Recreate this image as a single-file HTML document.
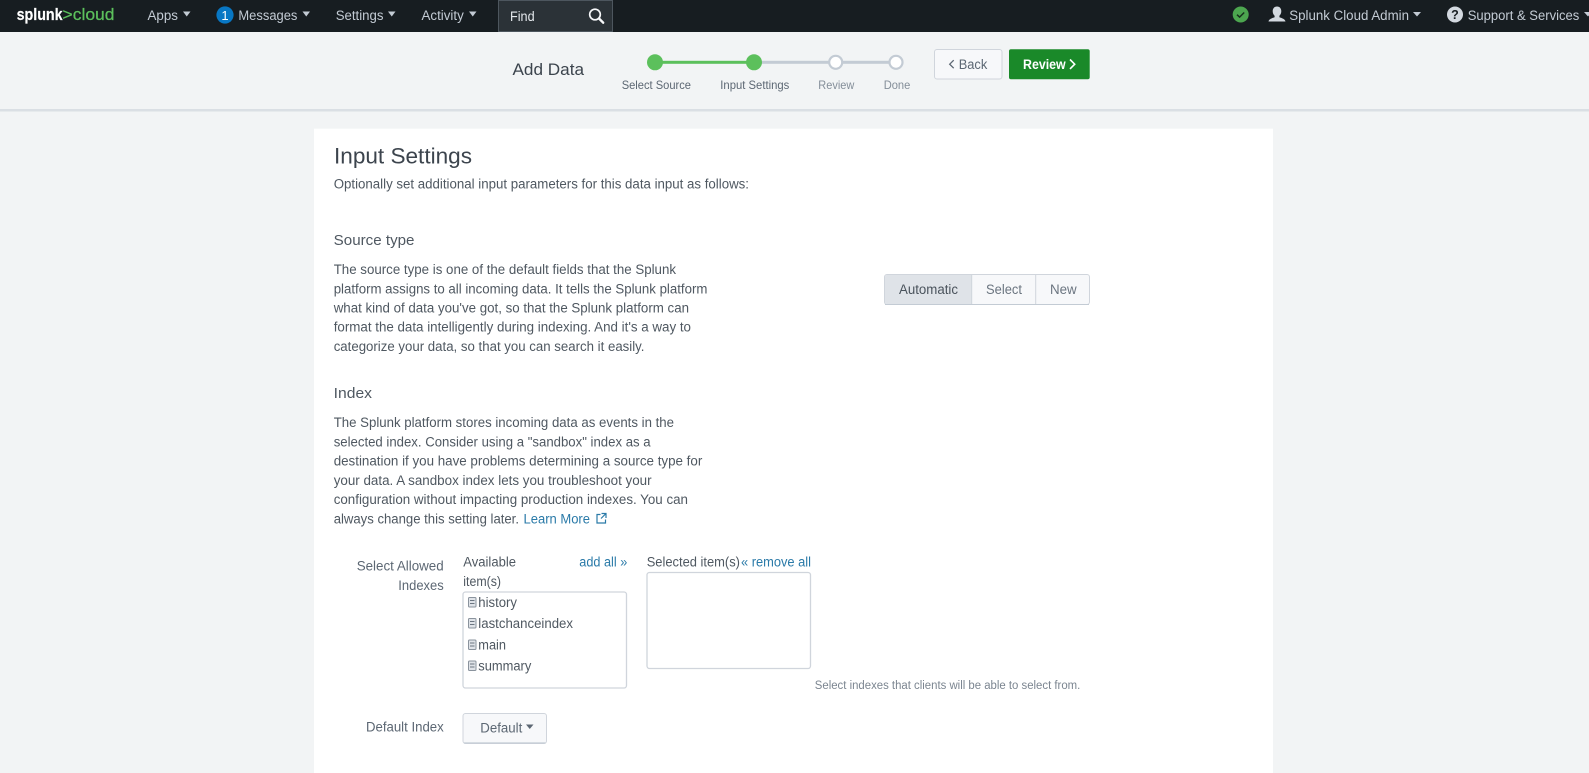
<!DOCTYPE html>
<html lang="en">
<head>
<meta charset="utf-8">
<title>Add Data - Input Settings</title>
<style>
html,body{margin:0;padding:0;width:1589px;height:773px;overflow:hidden;background:#f2f4f5}
svg{display:block;font-family:"Liberation Sans",sans-serif;filter:blur(.35px)}
.n{font-size:13.5px;fill:#c3cbd4}
.p{font-size:13.4px;fill:#4f5861}
.l{font-size:13.4px;fill:#5c6773}
.a{font-size:13.4px;fill:#2a7aa8}
</style>
</head>
<body>
<svg width="1589" height="773" viewBox="0 0 1589 773" xmlns="http://www.w3.org/2000/svg">
<rect width="1589" height="773" fill="#f2f4f5"/>
<!-- nav -->
<rect width="1589" height="32" fill="#171d21"/>
<text x="16.600" y="20" font-size="17" font-weight="700" fill="#fff" stroke="#fff" stroke-width=".2" textLength="46" lengthAdjust="spacingAndGlyphs">splunk</text>
<text x="62.500" y="20" font-size="17" fill="#5cc05c" stroke="#5cc05c" stroke-width=".25" textLength="52" lengthAdjust="spacingAndGlyphs">&gt;cloud</text>
<text class="n" x="147.500" y="20" textLength="30.500" lengthAdjust="spacingAndGlyphs">Apps</text>
<path d="M183 11.500h7.500l-3.750 5z" fill="#c3cbd4"/>
<circle cx="225" cy="15" r="8.600" fill="#0877c4"/>
<text x="225" y="20" font-size="13" fill="#fff" text-anchor="middle">1</text>
<text class="n" x="238.400" y="20" textLength="59" lengthAdjust="spacingAndGlyphs">Messages</text>
<path d="M302.500 11.500h7.500l-3.750 5z" fill="#c3cbd4"/>
<text class="n" x="335.700" y="20" textLength="47.800" lengthAdjust="spacingAndGlyphs">Settings</text>
<path d="M388 11.500h7.500l-3.750 5z" fill="#c3cbd4"/>
<text class="n" x="421.500" y="20" textLength="42.300" lengthAdjust="spacingAndGlyphs">Activity</text>
<path d="M469 11.500h7.500l-3.750 5z" fill="#c3cbd4"/>
<rect x="498.500" y="0.500" width="114" height="31" fill="#2b3237" stroke="#4d565e"/>
<text x="510" y="21" font-size="13.500" fill="#e4e8ec" textLength="24.600" lengthAdjust="spacingAndGlyphs">Find</text>
<circle cx="595" cy="14.500" r="5.300" fill="none" stroke="#f7f8fa" stroke-width="1.700"/>
<path d="M599 18.500l4.200 4.200" stroke="#f7f8fa" stroke-width="2.400" stroke-linecap="round"/>
<circle cx="1240.700" cy="14.500" r="8" fill="#4ca64f"/>
<path d="M1237 14.700l2.600 2.400 4.600-4.600" fill="none" stroke="#17301c" stroke-width="1.500"/>
<path d="M1277 6.500c2.800 0 4.300 2.100 4.300 4.700 0 2.100-1 3.700-1.900 4.500v1.500c2.500.9 5.600 1.700 6.100 4.300h-17c.5-2.600 3.600-3.400 6.100-4.300v-1.500c-.9-.8-1.900-2.400-1.900-4.500 0-2.600 1.500-4.700 4.300-4.700z" fill="#d3d9e0"/>
<text class="n" x="1289.300" y="20" textLength="119.700" lengthAdjust="spacingAndGlyphs">Splunk Cloud Admin</text>
<path d="M1413 12h8l-4 4.500z" fill="#c3cbd4"/>
<circle cx="1455" cy="14.500" r="8" fill="#d3d9e0"/>
<text x="1455" y="19" font-size="12.500" font-weight="700" fill="#171d21" text-anchor="middle">?</text>
<text class="n" x="1467.700" y="20" textLength="111.600" lengthAdjust="spacingAndGlyphs">Support &amp; Services</text>
<path d="M1584 12h8l-4 4.500z" fill="#c3cbd4"/>
<!-- header band -->
<rect y="109" width="1589" height="2.500" fill="#dadfe4"/>
<text x="512.500" y="75" font-size="17" fill="#3c444d" textLength="71.500" lengthAdjust="spacingAndGlyphs">Add Data</text>
<rect x="655" y="60.800" width="99" height="3" fill="#5cc05c"/>
<rect x="754" y="60.800" width="142" height="3" fill="#c3cbd4"/>
<circle cx="655" cy="62.300" r="8" fill="#5cc05c"/>
<circle cx="754" cy="62.300" r="8" fill="#5cc05c"/>
<circle cx="835.700" cy="62.300" r="6.500" fill="#fff" stroke="#c3cbd4" stroke-width="2.200"/>
<circle cx="896" cy="62.300" r="6.500" fill="#fff" stroke="#c3cbd4" stroke-width="2.200"/>
<text x="621.700" y="89" font-size="12" fill="#5c6773" textLength="69.300" lengthAdjust="spacingAndGlyphs">Select Source</text>
<text x="720.300" y="89" font-size="12" fill="#5c6773" textLength="69" lengthAdjust="spacingAndGlyphs">Input Settings</text>
<text x="818.300" y="89" font-size="12" fill="#848e99" textLength="36" lengthAdjust="spacingAndGlyphs">Review</text>
<text x="883.700" y="89" font-size="12" fill="#848e99" textLength="26.600" lengthAdjust="spacingAndGlyphs">Done</text>
<rect x="934.500" y="49.500" width="67.500" height="29.500" rx="2.500" fill="#f7f8fa" stroke="#d0d5dc"/>
<path d="M953.700 60.200l-4 4 4 4" fill="none" stroke="#5c6773" stroke-width="1.300"/>
<text x="958.700" y="69" font-size="13.500" fill="#5c6773" textLength="28.600" lengthAdjust="spacingAndGlyphs">Back</text>
<rect x="1009" y="49.300" width="80.700" height="30" rx="2" fill="#1a8929"/>
<text x="1023" y="69" font-size="13.500" font-weight="700" fill="#fff" textLength="42.700" lengthAdjust="spacingAndGlyphs">Review</text>
<path d="M1070 59.500l4.700 4.700-4.700 4.700" fill="none" stroke="#fff" stroke-width="1.600"/>
<!-- panel -->
<rect x="314" y="128.700" width="959" height="645" fill="#fff"/>
<text x="334" y="163.300" font-size="22" fill="#3c444d" textLength="138" lengthAdjust="spacingAndGlyphs">Input Settings</text>
<text class="p" x="333.700" y="188.300" textLength="415.300" lengthAdjust="spacingAndGlyphs">Optionally set additional input parameters for this data input as follows:</text>
<text x="333.700" y="245" font-size="14.500" fill="#4f5861" textLength="80.800" lengthAdjust="spacingAndGlyphs">Source type</text>
<text class="p" x="333.700" y="274" textLength="342.300" lengthAdjust="spacingAndGlyphs">The source type is one of the default fields that the Splunk</text>
<text class="p" x="333.700" y="293.300" textLength="373.700" lengthAdjust="spacingAndGlyphs">platform assigns to all incoming data. It tells the Splunk platform</text>
<text class="p" x="333.700" y="312.300" textLength="355.300" lengthAdjust="spacingAndGlyphs">what kind of data you've got, so that the Splunk platform can</text>
<text class="p" x="333.700" y="331.700" textLength="357.300" lengthAdjust="spacingAndGlyphs">format the data intelligently during indexing. And it's a way to</text>
<text class="p" x="333.700" y="351" textLength="310.800" lengthAdjust="spacingAndGlyphs">categorize your data, so that you can search it easily.</text>
<text x="333.700" y="398" font-size="14.500" fill="#4f5861" textLength="38.300" lengthAdjust="spacingAndGlyphs">Index</text>
<text class="p" x="333.700" y="427" textLength="340.300" lengthAdjust="spacingAndGlyphs">The Splunk platform stores incoming data as events in the</text>
<text class="p" x="333.700" y="446.300" textLength="316.900" lengthAdjust="spacingAndGlyphs">selected index. Consider using a "sandbox" index as a</text>
<text class="p" x="333.700" y="465.600" textLength="368.600" lengthAdjust="spacingAndGlyphs">destination if you have problems determining a source type for</text>
<text class="p" x="333.700" y="484.900" textLength="317.900" lengthAdjust="spacingAndGlyphs">your data. A sandbox index lets you troubleshoot your</text>
<text class="p" x="333.700" y="504.200" textLength="354.300" lengthAdjust="spacingAndGlyphs">configuration without impacting production indexes. You can</text>
<text class="p" x="333.700" y="523.500" textLength="185.300" lengthAdjust="spacingAndGlyphs">always change this setting later.</text>
<text class="a" x="523.500" y="523.500" textLength="66.500" lengthAdjust="spacingAndGlyphs">Learn More</text>
<path d="M600.500 514.500h-3.500v8.500h8.500v-3.500M601.500 513.500h4.500v4.500M606 513.500l-5 5" fill="none" stroke="#2a7aa8" stroke-width="1.200"/>
<!-- toggle -->
<rect x="884.500" y="274.500" width="205" height="30" rx="2.500" fill="#f7f8fa" stroke="#d0d5dc"/>
<path d="M887 275h84.500v29H887a2 2 0 0 1-2-2v-25a2 2 0 0 1 2-2z" fill="#dfe3e8"/>
<path d="M971.700 274.500v30M1035.700 274.500v30" stroke="#d0d5dc"/>
<path d="M885 304.500h204" stroke="#c3cbd4"/>
<text x="899" y="294" font-size="13.500" fill="#4a535c" textLength="59" lengthAdjust="spacingAndGlyphs">Automatic</text>
<text x="986" y="294" font-size="13.500" fill="#6b7580" textLength="36" lengthAdjust="spacingAndGlyphs">Select</text>
<text x="1050" y="294" font-size="13.500" fill="#6b7580" textLength="26.700" lengthAdjust="spacingAndGlyphs">New</text>
<!-- accumulator -->
<text class="l" x="356.700" y="570.700" textLength="87" lengthAdjust="spacingAndGlyphs">Select Allowed</text>
<text class="l" x="398.300" y="590" textLength="45.400" lengthAdjust="spacingAndGlyphs">Indexes</text>
<text class="p" x="463.300" y="566.500" textLength="52.700" lengthAdjust="spacingAndGlyphs">Available</text>
<text class="p" x="463.300" y="586" textLength="37.700" lengthAdjust="spacingAndGlyphs">item(s)</text>
<text class="a" x="579.300" y="566.500" textLength="48" lengthAdjust="spacingAndGlyphs">add all »</text>
<text class="p" x="646.700" y="566.500" textLength="93.300" lengthAdjust="spacingAndGlyphs">Selected item(s)</text>
<text class="a" x="741" y="566.500" textLength="70" lengthAdjust="spacingAndGlyphs">« remove all</text>
<rect x="463" y="592" width="163.500" height="96" rx="2.500" fill="#fff" stroke="#d0d5dc" stroke-width="1.300"/>
<rect x="647" y="572.500" width="163.500" height="96" rx="2.500" fill="#fff" stroke="#d0d5dc" stroke-width="1.300"/>
<g fill="#dfe3e8" stroke="#8a939d" stroke-width="1">
<rect x="468.500" y="597.500" width="7.500" height="9.500" rx="1"/>
<rect x="468.500" y="618.500" width="7.500" height="9.500" rx="1"/>
<rect x="468.500" y="640" width="7.500" height="9.500" rx="1"/>
<rect x="468.500" y="661" width="7.500" height="9.500" rx="1"/>
</g>
<path d="M470 600.500h4.500M470 603.500h4.500M470 621.500h4.500M470 624.500h4.500M470 643h4.500M470 646h4.500M470 664h4.500M470 667h4.500" stroke="#6b7580" stroke-width=".9"/>
<text class="p" x="478.300" y="606.800" textLength="38.700" lengthAdjust="spacingAndGlyphs">history</text>
<text class="p" x="478.300" y="627.800" textLength="94.700" lengthAdjust="spacingAndGlyphs">lastchanceindex</text>
<text class="p" x="478.300" y="649.300" textLength="27.700" lengthAdjust="spacingAndGlyphs">main</text>
<text class="p" x="478.300" y="670.300" textLength="53" lengthAdjust="spacingAndGlyphs">summary</text>
<text x="814.800" y="689" font-size="11.500" fill="#7b8590" textLength="265.500" lengthAdjust="spacingAndGlyphs">Select indexes that clients will be able to select from.</text>
<text class="l" x="366" y="731.300" textLength="77.700" lengthAdjust="spacingAndGlyphs">Default Index</text>
<rect x="463" y="713.500" width="83.500" height="30" rx="2.500" fill="#f7f8fa" stroke="#d0d5dc"/>
<path d="M464 743h81.500" stroke="#c3cbd4" stroke-width="1.200"/>
<text x="480.300" y="732.500" font-size="13.500" fill="#5c6773" textLength="42" lengthAdjust="spacingAndGlyphs">Default</text>
<path d="M526 724.500h7.500l-3.750 4.500z" fill="#5c6773"/>
</svg>
</body>
</html>
